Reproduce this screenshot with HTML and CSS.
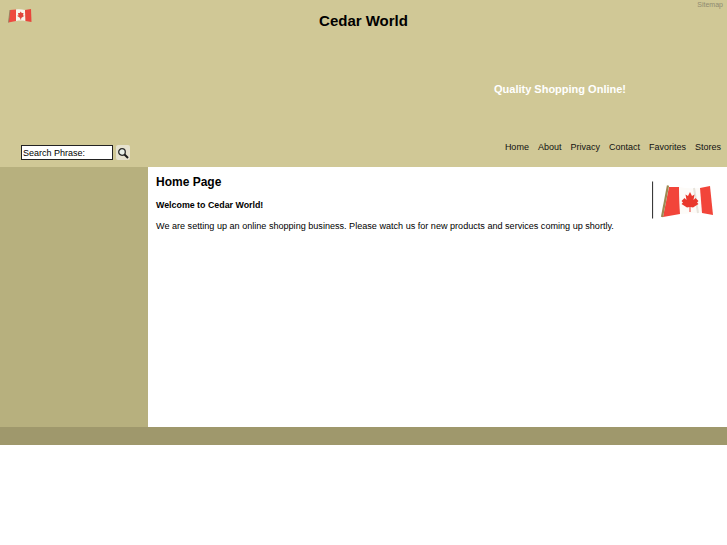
FILE: index.html
```html
<!DOCTYPE html>
<html lang="en">
<head>
<meta charset="utf-8">
<title>Cedar World</title>
<link rel="stylesheet" href="styles.css">
</head>
<body>
<header class="header">
  <div class="top">
    <svg class="mini-flag" width="24" height="15" viewBox="0 0 24 15">
      <path d="M2 2 L8 1.500 L8 13 L0.500 14.500Z" fill="#ee4a40"/>
      <path d="M8 1.500 C11 0.800 14 1.300 17 2 L17.500 13 C14 12.300 11 12.500 8 13Z" fill="#f8f4ec"/>
      <path d="M17 2 L23 1 L23.500 14 L17.500 13Z" fill="#e8453b"/>
      <path d="M12.700 3.500 L13.700 5 L15.500 5 L15 7.500 L16.500 7.800 L13.200 10 L13.200 11.500 L12.200 11.500 L12.200 10 L9 7.800 L10.500 7.500 L10 5 L11.800 5Z" fill="#e0453b"/>
      <path d="M2 2 L0.500 14.500" stroke="#8a8260" stroke-width="0.800"/>
    </svg>
    <h1 class="title">Cedar World</h1>
    <a class="sitemap" href="#">Sitemap</a>
  </div>
  <p class="tagline">Quality Shopping Online!</p>
  <div class="bottom">
    <form class="search">
      <input class="search-input" type="text" value="Search Phrase:">
      <button class="search-btn" type="button" aria-label="Search">
        <svg width="12" height="12" viewBox="0 0 12 12">
          <circle cx="5" cy="5" r="3.300" fill="#e8efe8" stroke="#2a2a2a" stroke-width="1.300"/>
          <path d="M7.500 7.500 L11 11" stroke="#1a1a1a" stroke-width="2"/>
        </svg>
      </button>
    </form>
    <nav class="nav">
      <a href="#">Home</a>
      <a href="#">About</a>
      <a href="#">Privacy</a>
      <a href="#">Contact</a>
      <a href="#">Favorites</a>
      <a href="#">Stores</a>
    </nav>
  </div>
</header>
<div class="main">
  <aside class="sidebar"></aside>
  <main class="content">
    <svg class="flag" width="64" height="38" viewBox="0 0 64 38">
      <path d="M0.500 0.500 V37.500" stroke="#3a3a3a" stroke-width="1.200"/>
      <path d="M17 6 L27 6 L28 33 L11 36Z" fill="#f2453a"/>
      <path d="M27 6 C33 7 40 8 48 7 L50 32 C43 31 35 33 28 33Z" fill="#fdfbf8"/>
      <path d="M42 7 L46 32" stroke="#e8e4dc" stroke-width="2"/>
      <path d="M48 7 L58 5 L61 34 L50 32Z" fill="#f2453a"/>
      <path d="M38 11 L40 15 L42.500 13.500 L41.500 19 L43.500 17 L46.500 20 L45 21.500 L46.500 23 L41 26.500 L38.500 26 L38.500 31 L37.500 31 L37.500 26 L35 26.500 L29.500 23 L31 21.500 L29.500 20 L32.500 17 L34.500 19 L33.500 13.500 L36 15Z" fill="#e9382c"/>
      <path d="M16 4.500 L10 36" stroke="#9c8a52" stroke-width="2.200"/>
    </svg>
    <h2 class="page-title">Home Page</h2>
    <p class="lead">Welcome to Cedar World!</p>
    <p class="body-text">We are setting up an online shopping business. Please watch us for new products and services coming up shortly.</p>
  </main>
</div>
<footer class="footer"></footer>
</body>
</html>
```
FILE: styles.css
```css
* { box-sizing: border-box; }
html, body { margin: 0; padding: 0; background: #fff; }
body { font-family: "Liberation Sans", Arial, sans-serif; color: #000; }

.header {
  height: 167px;
  background: #d0c896;
  display: flex;
  flex-direction: column;
}
.top {
  display: grid;
  grid-template-columns: 1fr auto 1fr;
  height: 82px;
}
.mini-flag { margin: 8px 0 0 8px; }
.title {
  margin: 12px 0 0;
  font-size: 15px;
  line-height: 18px;
  font-weight: bold;
}
.sitemap {
  justify-self: end;
  margin: 0 4px 0 0;
  font-size: 7px;
  line-height: 9px;
  color: #8f8a70;
  text-decoration: none;
}
.tagline {
  margin: 0;
  padding-left: 494px;
  height: 14px;
  font-size: 11px;
  line-height: 14px;
  font-weight: bold;
  color: #fff;
}
.bottom {
  margin-top: auto;
  display: flex;
  justify-content: space-between;
  align-items: flex-start;
  padding: 0 6px 7px 21px;
}
.search { display: flex; align-items: center; gap: 3px; margin-top: 4px; }
.search-input {
  width: 92px;
  height: 15px;
  padding: 0 1px;
  border: 1px solid #222;
  border-radius: 0;
  background: #fff;
  font: 9px/13px "Liberation Sans", Arial, sans-serif;
  color: #000;
}
.search-btn {
  width: 14px;
  height: 15px;
  padding: 0;
  border: 0;
  border-radius: 2px;
  background: #e6e2cf;
  display: flex;
  align-items: center;
  justify-content: center;
}
.nav { display: flex; gap: 9px; margin-bottom: 3px; }
.nav a {
  font-size: 9px;
  line-height: 12px;
  color: #111;
  text-decoration: none;
}

.main { display: flex; height: 260px; }
.sidebar { width: 148px; background: #b7b07e; }
.content { flex: 1; padding: 8px 6px 0 8px; background: #fff; }
.flag { float: right; margin: 6px 5px 0 0; }
.page-title {
  margin: 0 0 10px;
  font-size: 12px;
  line-height: 14px;
  font-weight: bold;
}
.lead {
  margin: 0 0 9px;
  font-size: 8.85px;
  line-height: 12px;
  font-weight: bold;
}
.body-text {
  margin: 0;
  font-size: 9.08px;
  line-height: 12px;
}
.footer { height: 18px; background: #9f986c; }
```
